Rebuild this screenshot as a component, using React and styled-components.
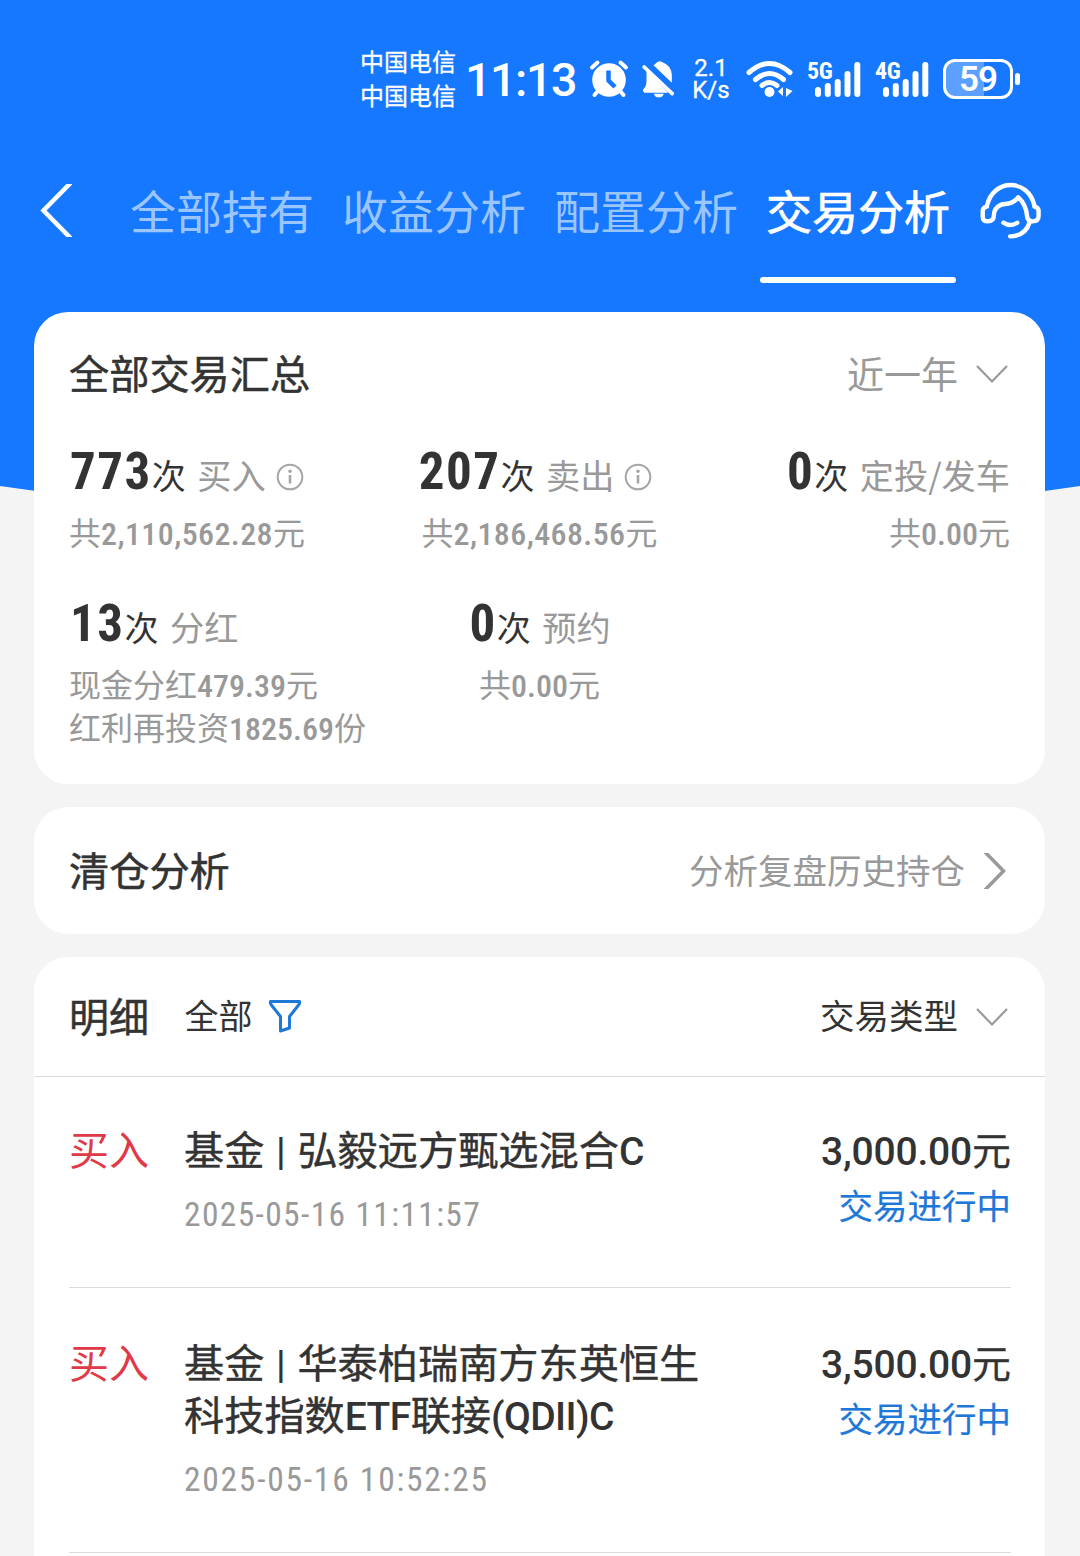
import React from "react";
import styled, { createGlobalStyle } from "styled-components";

const cjk = `"Noto Sans CJK SC", "Noto Sans", sans-serif`;
const latin = `Roboto, "Noto Sans CJK SC", sans-serif`;

const GlobalStyle = createGlobalStyle`
  body { margin: 0; background: #f4f4f4; }
  * { box-sizing: border-box; }
`;

const Page = styled.div`
  position: relative;
  width: 1080px;
  height: 1556px;
  overflow: hidden;
  background: #f4f4f4;
  font-family: ${cjk};
  color: #333;
`;
const Backdrop = styled.svg`
  position: absolute;
  inset: 0 auto auto 0;
`;
const Screen = styled.div`
  position: relative;
  display: flex;
  flex-direction: column;
`;
const Text = styled.span`
  font-family: ${cjk};
  font-size: ${(p) => p.$size}px;
  line-height: ${(p) => p.$line || p.$size}px;
  font-weight: ${(p) => p.$weight || 400};
  color: ${(p) => p.$color || "inherit"};
  letter-spacing: ${(p) => p.$track || 0}px;
  padding-bottom: ${(p) => p.$lift || 0}px;
  white-space: pre;
  -webkit-text-stroke: ${(p) => p.$stroke || 0}px currentColor;
`;
const Latin = styled(Text)`
  font-family: ${latin};
`;
const Narrow = styled(Text)`
  font-family: "Roboto Condensed", ${latin};
  font-stretch: condensed;
`;

/* status bar */
const StatusBar = styled.header`
  display: flex;
  align-items: center;
  height: 158px;
  padding-left: 360px;
  color: #fff;
`;
const Stack = styled.div`
  display: flex;
  flex-direction: column;
  align-items: center;
  width: ${(p) => p.$width}px;
  margin-left: ${(p) => p.$left || 0}px;
`;
const Clock = styled.div`
  display: flex;
  width: 120px;
  margin-left: 9px;
  padding-top: 2px;
`;
const Glyph = styled.svg`
  flex: none;
  display: block;
  margin-left: ${(p) => p.$left || 0}px;
  margin-top: ${(p) => p.$top || 0}px;
`;
const Signal = styled.div`
  position: relative;
  flex: none;
  width: 54px;
  height: 38px;
  margin-left: ${(p) => p.$left}px;
`;
const SignalLabel = styled.div`
  position: absolute;
  left: 0;
  top: 0;
  display: flex;
`;
const Battery = styled.div`
  flex: none;
  display: flex;
  align-items: center;
  justify-content: center;
  width: 70px;
  height: 40px;
  margin-left: 14px;
  padding-top: 2px;
  border: 3px solid #fff;
  border-radius: 12px;
  background: linear-gradient(90deg, #5b9fff 59%, transparent 59%);
`;
const BatteryTip = styled.i`
  flex: none;
  width: 5px;
  height: 12px;
  margin-left: 2px;
  border-radius: 3px;
  background: #fff;
`;

/* tabs */
const TabBar = styled.nav`
  display: flex;
  height: 154px;
  padding-left: 39px;
`;
const Tabs = styled.div`
  display: flex;
  margin-left: 44px;
`;
const Tab = styled.div`
  display: flex;
  flex-direction: column;
  align-items: center;
  width: 212px;
  padding-top: 21px;
  color: ${(p) => (p.$active ? "#fff" : "#9ac5ff")};
`;
const TabLine = styled.i`
  width: 196px;
  height: 6px;
  margin-top: 38px;
  border-radius: 3px;
  background: #fff;
`;

/* cards */
const Cards = styled.main`
  display: flex;
  flex-direction: column;
  gap: 23px;
  padding: 0 35px 0 34px;
`;
const Card = styled.section`
  height: ${(p) => p.$height}px;
  border-radius: 34px;
  background: #fff;
`;
const CardHead = styled.div`
  display: flex;
  align-items: center;
  height: ${(p) => p.$height}px;
  padding: 0 37px 0 35px;
  border-bottom: ${(p) => (p.$ruled ? "1px solid #dcdcdc" : "none")};
`;
const Push = styled.div`
  display: flex;
  align-items: center;
  margin-left: auto;
`;
const Filter = styled.div`
  display: flex;
  align-items: center;
  margin-left: 35.5px;
`;
const StatGrid = styled.div`
  display: grid;
  grid-template-columns: 313px 1fr 313px;
  grid-template-rows: 152px auto;
  padding: 0 35px;
`;
const Stat = styled.div`
  display: flex;
  flex-direction: column;
  align-items: ${(p) => p.$align || "flex-start"};
`;
const StatLine = styled.div`
  display: flex;
  align-items: baseline;
  height: 74px;
  line-height: 72px;
`;
const StatNote = styled.div`
  display: flex;
  align-items: baseline;
  height: 43px;
`;
const StatLabel = styled.div`
  display: flex;
  margin-left: 11.5px;
`;
const Count = styled.div`
  display: flex;
  padding-left: 1px;
`;
const InfoSlot = styled.span`
  align-self: flex-start;
  padding-top: 27px;
  margin-right: 9px;
`;

/* records */
const Record = styled.article`
  display: flex;
  height: ${(p) => p.$height}px;
  margin: 0 34px 0 35px;
  padding-top: ${(p) => p.$top}px;
  border-bottom: 1px solid #dcdcdc;
`;
const Side = styled.div`
  width: 115px;
`;
const Body = styled.div`
  display: flex;
  flex-direction: column;
  flex: 1;
`;
const TitleLine = styled.div`
  display: flex;
  align-items: baseline;
  height: 52px;
`;
const Stamp = styled.div`
  display: flex;
  margin-top: 18px;
`;
const Amount = styled.div`
  display: flex;
  flex-direction: column;
  align-items: flex-end;
`;
const Pipe = styled.span`
  width: 33px;
  text-align: center;
  font: 500 39px/52px ${latin};
`;

const Chevron = ({ left }) => (
  <Glyph $left={left} width="32" height="20" viewBox="0 0 32 20" fill="none" stroke="#999" strokeWidth="2.2">
    <path d="M1 2L16 17.5L31 2" />
  </Glyph>
);
const Info = () => (
  <Glyph $left={10} width="28" height="28" viewBox="0 0 28 28" fill="none" stroke="#a5a5a5" strokeWidth="2">
    <circle cx="14" cy="14" r="12.3" />
    <path d="M14 12V20.5" strokeWidth="2.6" />
    <circle cx="14" cy="8.2" r="1.7" fill="#a5a5a5" stroke="none" />
  </Glyph>
);

const SignalBars = ({ label, left }) => (
  <Signal $left={left}>
    <svg width="54" height="38" viewBox="0 0 54 38" fill="none" stroke="#fff" strokeWidth="6" strokeLinecap="round">
      <path d="M11 30V34M20.8 26V34M30.7 22V34M40.5 14V34M50.3 5V34" />
    </svg>
    <SignalLabel>
      <Narrow $size={24} $line={22} $weight={700} $track={-0.3}>{label}</Narrow>
    </SignalLabel>
  </Signal>
);

function Metric({ count, label, info, notes, align }) {
  return (
    <Stat $align={align}>
      <StatLine>
        <Count><Narrow $size={51} $line={72} $weight={700} $track={1.5}>{count}</Narrow></Count>
        <Text $size={34} $line={72}>次</Text>
        <StatLabel><Text $size={34.2} $line={72} $color="#999">{label}</Text></StatLabel>
        {info && <InfoSlot><Info /></InfoSlot>}
      </StatLine>
      {notes.map(([pre, num, post], i) => (
        <StatNote key={i}>
          <Text $size={32} $line={43} $color="#999">{pre}</Text>
          <Narrow $size={32} $line={43} $weight={500} $color="#999" $track={num.length > 8 ? 0.4 : 0}>{num}</Narrow>
          <Text $size={32} $line={43} $color="#999">{post}</Text>
        </StatNote>
      ))}
    </Stat>
  );
}

function Trade({ height, top, lines, stamp, stampTrack, amount }) {
  return (
    <Record $height={height} $top={top}>
      <Side><Text $size={40} $line={52} $color="#e03a48">买入</Text></Side>
      <Body>
        {lines.map((parts, i) => (
          <TitleLine key={i}>
            {parts.map((t, j) =>
              t === "|" ? <Pipe key={j}>|</Pipe> :
              /^[\x00-\x7f]+$/.test(t) ?
                <Latin key={j} $size={39} $line={52} $weight={500} $track={-0.6}>{t}</Latin> :
                <Text key={j} $size={40.2} $line={52} $stroke={0.4}>{t}</Text>
            )}
          </TitleLine>
        ))}
        <Stamp><Narrow $size={33.5} $line={46} $color="#999" $track={stampTrack}>{stamp}</Narrow></Stamp>
      </Body>
      <Amount>
        <TitleLine>
          <Latin $size={39} $line={52} $weight={500} $track={-0.2}>{amount}</Latin>
          <Text $size={39} $line={52} $stroke={0.3}>元</Text>
        </TitleLine>
        <Text $size={34.5} $line={61} $color="#1e78d8" $stroke={0.2}>交易进行中</Text>
      </Amount>
    </Record>
  );
}

export default function App() {
  return (
    <Page>
      <GlobalStyle />
      <Backdrop width="1080" height="540" viewBox="0 0 1080 540">
        <path d="M0 0H1080V486Q540 565 0 486Z" fill="#1677ff" />
      </Backdrop>
      <Screen>
        <StatusBar>
          <Stack $width={96}>
            <Text $size={24} $line={34} $stroke={0.3}>中国电信</Text>
            <Text $size={24} $line={34} $stroke={0.3} $lift={2}>中国电信</Text>
          </Stack>
          <Clock><Latin $size={46.5} $line={60} $weight={500} $track={-1.4}>11:13</Latin></Clock>
          <Glyph $left={4} width="40" height="40" viewBox="0 0 40 40" fill="none" stroke="#fff" strokeWidth="4" strokeLinecap="round">
            <circle cx="20" cy="21" r="16.8" fill="#fff" stroke="none" />
            <path d="M3 8.5L8.5 3.5M37 8.5L31.5 3.5M8 33L5.5 36M32 33L34.5 36" />
            <path d="M19.5 11.5V21.5L26 28" stroke="#1677ff" strokeWidth="4.5" strokeLinecap="butt" />
          </Glyph>
          <Glyph $left={12} width="35" height="40" viewBox="874 56 104 120" fill="#fff">
            <path d="M890 90L955 157H884Q875 151 883 144Q890 138 890 120Z" />
            <path d="M911 75Q917 71 919 68Q927 59 936 65Q965 75 966 105V127Z" />
            <path d="M912 160H942Q939 171 927 171Q915 171 912 160Z" />
            <path d="M883 80L967 160" stroke="#fff" strokeWidth="11" strokeLinecap="round" />
          </Glyph>
          <Stack $width={40} $left={15}>
            <Latin $size={24} $line={22} $weight={400} $stroke={0.3}>2.1</Latin>
            <Latin $size={24} $line={22} $weight={400} $stroke={0.3}>K/s</Latin>
          </Stack>
          <Glyph $left={15} width="48" height="38" viewBox="0 0 48 38" fill="none" stroke="#fff" strokeWidth="5" strokeLinecap="round">
            <path d="M3 12.5Q23.5 -5.5 44 12.5M9.5 19.5Q23.5 7.5 37.5 19.5M16 25.5Q23.5 19.5 31 25.5" />
            <circle cx="23.5" cy="32" r="5" fill="#fff" stroke="none" />
            <path d="M37 27V36L32 31.5ZM40 28V37L46.5 31Z" fill="#fff" stroke="none" />
          </Glyph>
          <SignalBars label="5G" left={13} />
          <SignalBars label="4G" left={14} />
          <Battery><Latin $size={35} $line={36} $weight={600} $track={-1}>59</Latin></Battery>
          <BatteryTip />
        </StatusBar>

        <TabBar>
          <Glyph $top={26} width="33" height="53" viewBox="0 0 33 53" fill="none" stroke="#fff" strokeWidth="4.5">
            <path d="M34 -3.5L4.5 26.5L34 56.5" />
          </Glyph>
          <Tabs>
            {["全部持有", "收益分析", "配置分析", "交易分析"].map((t, i) => (
              <Tab key={t} $active={i === 3}>
                <Text $size={46} $line={60} $stroke={i === 3 ? 0.7 : 0}>{t}</Text>
                {i === 3 && <TabLine />}
              </Tab>
            ))}
          </Tabs>
          <Glyph $left={15} $top={22} width="65" height="61" viewBox="1275 60 192 183" preserveAspectRatio="none" fill="none" stroke="#fff" strokeWidth="13" strokeLinecap="round" strokeLinejoin="round">
            <path d="M1298 138C1308 96 1338 75 1368 75C1400 75 1430 96 1439 138" />
            <path d="M1298 140Q1286 142 1286 154V170Q1286 184 1301 184Q1319 184 1319 166C1319 145 1335 133 1352 132C1372 131 1382 125 1391 112C1407 126 1415 146 1417 168Q1418 184 1433 184Q1451 184 1451 168V154Q1451 142 1439 140" />
            <path d="M1347 188Q1368 202 1388 188M1425 186C1416 214 1396 229 1367 229" />
          </Glyph>
        </TabBar>

        <Cards>
          <Card $height={472}>
            <CardHead $height={124}>
              <Text $size={40.2} $line={60} $stroke={0.5} $lift={4}>全部交易汇总</Text>
              <Push><Text $size={37} $line={60} $color="#999" $lift={3}>近一年</Text><Chevron left={18} /></Push>
            </CardHead>
            <StatGrid>
              <Metric count="773" label="买入" info notes={[["共", "2,110,562.28", "元"]]} />
              <Metric count="207" label="卖出" info align="center" notes={[["共", "2,186,468.56", "元"]]} />
              <Metric count="0" label="定投/发车" align="flex-end" notes={[["共", "0.00", "元"]]} />
              <Metric count="13" label="分红" notes={[["现金分红", "479.39", "元"], ["红利再投资", "1825.69", "份"]]} />
              <Metric count="0" label="预约" align="center" notes={[["共", "0.00", "元"]]} />
            </StatGrid>
          </Card>

          <Card $height={127}>
            <CardHead $height={127}>
              <Text $size={40.2} $line={60} $stroke={0.5} $lift={3}>清仓分析</Text>
              <Push>
                <Text $size={34.5} $line={60} $color="#999" $lift={4}>分析复盘历史持仓</Text>
                <Glyph $left={17} width="26" height="36" viewBox="0 0 26 36" fill="none" stroke="#999" strokeWidth="3.5">
                  <path d="M2 -2L21.5 18L2 38" />
                </Glyph>
              </Push>
            </CardHead>
          </Card>

          <Card $height={640}>
            <CardHead $height={120} $ruled>
              <Text $size={40} $line={60} $stroke={0.5} $lift={3}>明细</Text>
              <Filter>
                <Text $size={34} $line={60} $lift={4}>全部</Text>
                <Glyph $left={15} $top={-2} width="34" height="34" viewBox="0 0 34 34" fill="none" stroke="#1e78d8" strokeWidth="3" strokeLinejoin="round">
                  <path d="M2.5 2.5H31.5Q32 4 31 5.5L21.5 17.5V29L12.5 32V17.5L3 5.5Q2 4 2.5 2.5Z" />
                </Glyph>
              </Filter>
              <Push><Text $size={34.5} $line={60} $lift={5}>交易类型</Text><Chevron left={18} /></Push>
            </CardHead>
            <Trade
              height={211}
              top={45}
              lines={[["基金", "|", "弘毅远方甄选混合", "C"]]}
              stamp="2025-05-16 11:11:57"
              stampTrack={1.35}
              amount="3,000.00"
            />
            <Trade
              height={265}
              top={47}
              lines={[["基金", "|", "华泰柏瑞南方东英恒生"], ["科技指数", "ETF", "联接", "(QDII)C"]]}
              stamp="2025-05-16 10:52:25"
              stampTrack={1.75}
              amount="3,500.00"
            />
          </Card>
        </Cards>
      </Screen>
    </Page>
  );
}
